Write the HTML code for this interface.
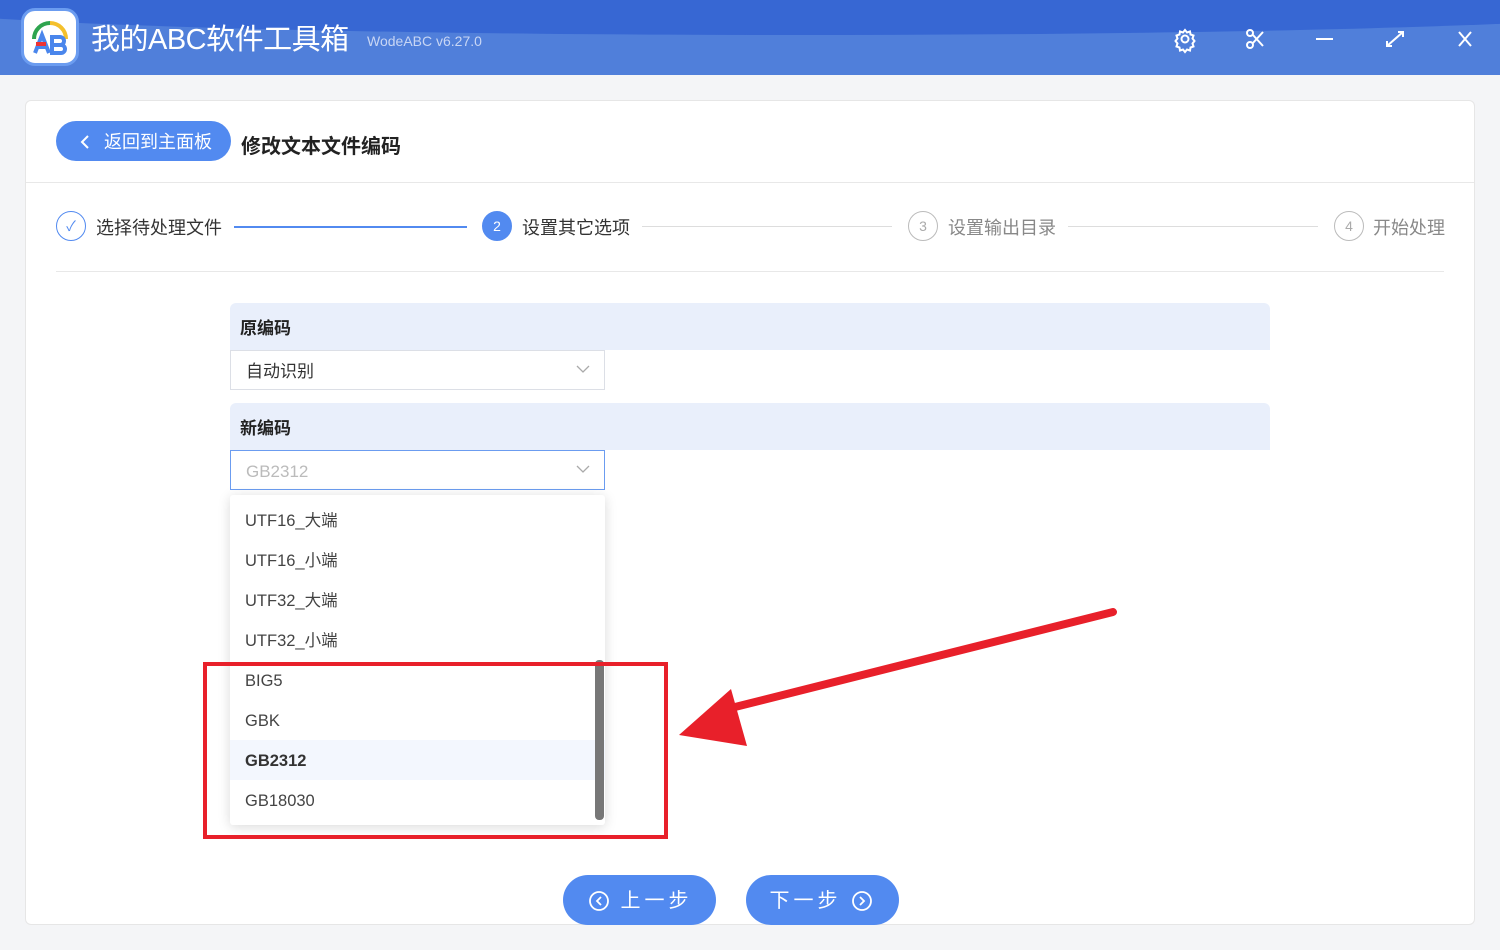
<!DOCTYPE html>
<html><head><meta charset="utf-8"><style>
*{margin:0;padding:0;box-sizing:border-box}
body{width:1500px;height:950px;overflow:hidden;background:#f4f5f7;font-family:"Liberation Sans","Noto Sans CJK SC",sans-serif;position:relative;color:#333}
.abs{position:absolute}
.tb{left:0;top:0;width:1500px;height:75px;background:#507fda;overflow:hidden}
.tb .top{left:-100px;top:-300px;width:1800px;height:335px;background:#3767d3;border-radius:0 0 50% 50%/0 0 30px 30px}
.card{left:25px;top:100px;width:1450px;height:825px;background:#fff;border:1px solid #e6e6e6;border-radius:6px}
.btnb{left:56px;top:121px;width:175px;height:40px;background:#528af0;border-radius:20px;color:#fff;font-size:18px;line-height:42px;padding-left:48px}
.step{font-size:18px;top:216px;line-height:24px}
.circ{width:30px;height:30px;border-radius:50%;border:1px solid #bbb;top:211px;font-size:14px;text-align:center;line-height:28px;color:#aaa}
.hd{left:230px;width:1040px;height:47px;background:#e9effb;border-radius:6px 6px 0 0;font-weight:bold;font-size:17px;line-height:52px;padding-left:10px;color:#222}
.sel{left:230px;width:375px;height:40px;border:1px solid #dcdfe6;background:#fff;font-size:17px;line-height:41px;padding-left:15px}
.dd{left:230px;top:495px;width:375px;height:330px;background:#fff;box-shadow:0 2px 12px rgba(0,0,0,.15);border-radius:3px}
.it{left:0;width:375px;height:40px;font-size:16.5px;line-height:43px;padding-left:15px;color:#444}
.nb{top:875px;height:50px;background:#528af0;border-radius:25px;color:#fff;font-size:20px;line-height:52px;text-align:center;letter-spacing:4px}
</style></head><body>
<div class="abs tb"><div class="abs top"></div>
<div class="abs" style="left:21px;top:8px;width:58px;height:58px;border-radius:14px;background:#fff;border:3px solid #6b9cf0">
<svg width="52" height="52" viewBox="0 0 52 52" class="abs" style="left:0;top:0"><path d="M10 28 A16 16 0 0 1 26 12" stroke="#2ea44f" stroke-width="4" fill="none"/><path d="M26 12 A16 16 0 0 1 42 28" stroke="#f4c02c" stroke-width="4" fill="none"/><path d="M11 42 L18 24 L25 42 M13 36 H23" stroke="#4a86ec" stroke-width="4" fill="none"/><path d="M28 26 H36 A4 4 0 0 1 36 34 H28 Z M28 34 H37 A4 4 0 0 1 37 42 H28 Z" stroke="#4a86ec" stroke-width="4" fill="none"/><rect x="12" y="31" width="10" height="4" fill="#e33"/></svg></div>
<div class="abs" style="left:91px;top:20px;color:#fff;font-size:29px;line-height:40px;letter-spacing:-0.5px">我的ABC软件工具箱</div>
<div class="abs" style="left:367px;top:33px;color:#c8d6f4;font-size:14px">WodeABC v6.27.0</div>
<svg class="abs" style="left:1170px;top:24px" width="310" height="30" viewBox="0 0 310 30" fill="none" stroke="#fff" stroke-width="2">
<circle cx="15" cy="15" r="3.5"/><path d="M15 6 l2 2.5 3-1 .5 3 3 1-1 3 2 2.5-2 2.5 1 3-3 1-.5 3-3-1-2 2.5-2-2.5-3 1-.5-3-3-1 1-3-2-2.5 2-2.5-1-3 3-1 .5-3 3 1z"/>
<circle cx="80" cy="21" r="3"/><circle cx="80" cy="9" r="3"/><path d="M82.5 19.5 L93 8 M82.5 10.5 L93 22"/>
<path d="M146 15 H163"/><path d="M217 22 L233 8 M228 8 h5 v5 M217 17 v5 h5"/><path d="M289 8 L301 22 M301 8 L289 22"/></svg>
</div>
<div class="abs card"></div>
<div class="abs btnb">返回到主面板</div>
<svg class="abs" style="left:78px;top:134px" width="14" height="16"><path d="M10 2 L4 8 L10 14" stroke="#fff" stroke-width="2" fill="none"/></svg>
<div class="abs" style="left:241px;top:130px;font-size:20px;font-weight:bold;color:#222">修改文本文件编码</div>
<div class="abs" style="left:26px;top:182px;width:1448px;height:1px;background:#e8e8e8"></div>
<div class="abs circ" style="left:56px;border-color:#528af0;color:#528af0">✓</div>
<div class="abs step" style="left:96px">选择待处理文件</div>
<div class="abs" style="left:234px;top:226px;width:233px;height:2px;background:#528af0"></div>
<div class="abs circ" style="left:482px;background:#528af0;border-color:#528af0;color:#fff">2</div>
<div class="abs step" style="left:522px">设置其它选项</div>
<div class="abs" style="left:642px;top:226px;width:250px;height:1px;background:#ddd"></div>
<div class="abs circ" style="left:908px">3</div>
<div class="abs step" style="left:948px;color:#888">设置输出目录</div>
<div class="abs" style="left:1068px;top:226px;width:250px;height:1px;background:#ddd"></div>
<div class="abs circ" style="left:1334px">4</div>
<div class="abs step" style="left:1373px;color:#888">开始处理</div>
<div class="abs" style="left:56px;top:271px;width:1388px;height:1px;background:#e8e8e8"></div>
<div class="abs hd" style="top:303px">原编码</div>
<div class="abs sel" style="top:350px">自动识别</div>
<div class="abs hd" style="top:403px">新编码</div>
<div class="abs sel" style="top:450px;border-color:#6b9cf0;color:#bbb">GB2312</div>
<svg class="abs" style="left:576px;top:364px" width="14" height="110"><path d="M1 2 L7 8 L13 2 M1 102 L7 108 L13 102" stroke="#aaa" stroke-width="1.3" fill="none"/></svg>
<div class="abs dd">
<div class="abs it" style="top:5px">UTF16_大端</div>
<div class="abs it" style="top:45px">UTF16_小端</div>
<div class="abs it" style="top:85px">UTF32_大端</div>
<div class="abs it" style="top:125px">UTF32_小端</div>
<div class="abs it" style="top:165px">BIG5</div>
<div class="abs it" style="top:205px">GBK</div>
<div class="abs it" style="top:245px;background:#f3f7fe;font-weight:bold;color:#333">GB2312</div>
<div class="abs it" style="top:285px">GB18030</div>
<div class="abs" style="left:365px;top:165px;width:9px;height:160px;background:#777;border-radius:4px"></div>
</div>
<div class="abs" style="left:203px;top:662px;width:465px;height:177px;border:4px solid #e8202a"></div>
<svg class="abs" style="left:0;top:0" width="1500" height="950"><path d="M1113 612 L735 707" stroke="#e8202a" stroke-width="8" fill="none" stroke-linecap="round"/><path d="M679 735 L731 689 L747 746 Z" fill="#e8202a"/></svg>
<div class="abs nb" style="left:563px;width:153px;padding-left:34px">上一步</div>
<div class="abs nb" style="left:746px;width:153px;padding-right:34px">下一步</div>
<svg class="abs" style="left:588px;top:890px" width="290" height="22" fill="none" stroke="#fff" stroke-width="1.8"><circle cx="11" cy="11" r="9"/><path d="M13 7 L9 11 L13 15"/><circle cx="274" cy="11" r="9"/><path d="M272 7 L276 11 L272 15"/></svg>
</body></html>
